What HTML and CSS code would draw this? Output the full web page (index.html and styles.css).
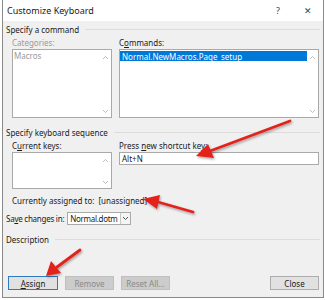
FILE: index.html
```html
<!DOCTYPE html>
<html>
<head>
  <meta charset="utf-8">
  <title>Customize Keyboard</title>
  <link rel="stylesheet" href="styles.css">
</head>
<body>

  <div class="window">
    <div class="titlebar">
      <span class="title">Customize Keyboard</span>
      <span class="help">?</span>
      <span class="x">&#x2715;</span>
    </div>

    <div class="dlg">
      <div class="group"><span>Specify a command</span></div>
      <div class="pair">
        <div class="col">
          <div class="lbl dim">Categories:</div>
          <div class="list tall">
            <div class="item dim">Macros</div>
            <div class="sb">
              <svg width="7" height="5" viewBox="0 0 7 5"><path d="M1 4 L3.5 1.5 L6 4" fill="none" stroke="#bdbdbd"/></svg>
              <svg width="7" height="5" viewBox="0 0 7 5"><path d="M1 1 L3.5 3.5 L6 1" fill="none" stroke="#bdbdbd"/></svg>
            </div>
          </div>
        </div>
        <div class="col">
          <div class="lbl">C<u>o</u>mmands:</div>
          <div class="list tall">
            <div class="item sel">Normal.NewMacros.Page_setup</div>
            <div class="sb">
              <svg width="7" height="5" viewBox="0 0 7 5"><path d="M1 4 L3.5 1.5 L6 4" fill="none" stroke="#bdbdbd"/></svg>
              <svg width="7" height="5" viewBox="0 0 7 5"><path d="M1 1 L3.5 3.5 L6 1" fill="none" stroke="#bdbdbd"/></svg>
            </div>
          </div>
        </div>
      </div>

      <div class="group g2"><span>Specify keyboard sequence</span></div>
      <div class="pair">
        <div class="col">
          <div class="lbl">C<u>u</u>rrent keys:</div>
          <div class="list keys">
            <div class="item"></div>
            <div class="sb">
              <svg width="7" height="5" viewBox="0 0 7 5"><path d="M1 4 L3.5 1.5 L6 4" fill="none" stroke="#bdbdbd"/></svg>
              <svg width="7" height="5" viewBox="0 0 7 5"><path d="M1 1 L3.5 3.5 L6 1" fill="none" stroke="#bdbdbd"/></svg>
            </div>
          </div>
        </div>
        <div class="col">
          <div class="lbl">Press <u>n</u>ew shortcut key:</div>
          <div class="textbox">Alt+N</div>
        </div>
      </div>

      <div class="assigned">Currently assigned to:<span class="val">[unassigned]</span></div>

      <div class="saverow">
        <span class="savelbl">Sa<u>v</u>e changes in:</span>
        <div class="combo">
          <span class="cval">Normal.dotm</span>
          <span class="carrow"><svg width="7" height="5" viewBox="0 0 7 5"><path d="M1 1 L3.5 3.5 L6 1" fill="none" stroke="#555"/></svg></span>
        </div>
      </div>

      <div class="group g3"><span>Description</span></div>

      <div class="buttons">
        <button class="btn default"><u>A</u>ssign</button>
        <button class="btn off">Remove</button>
        <button class="btn off">Reset All...</button>
        <span class="spacer"></span>
        <button class="btn">Close</button>
      </div>
    </div>
  </div>

  <!-- red annotation arrows drawn over the dialog -->
  <svg class="marks" width="325" height="300" viewBox="0 0 325 300">
    <defs>
      <filter id="shade" x="-20%" y="-20%" width="140%" height="140%">
        <feDropShadow dx="1" dy="1.5" stdDeviation="1" flood-color="#000" flood-opacity="0.35"/>
      </filter>
    </defs>
    <g fill="#e3231c" stroke="#e3231c" stroke-width="2.8" stroke-linecap="round" filter="url(#shade)">
      <line x1="290" y1="121" x2="210" y2="151"/>
      <polygon stroke="none" points="196,156 208,144 214,158"/>
      <line x1="193" y1="212" x2="158" y2="202"/>
      <polygon stroke="none" points="143,199 160,195 157,209"/>
      <line x1="80" y1="250" x2="57" y2="267"/>
      <polygon stroke="none" points="46,276 51,261 61,273"/>
    </g>
  </svg>

</body>
</html>
```

FILE: styles.css
```css
body {
  margin: 0;
  background: #fff;
  font-family: "Noto Sans", "Open Sans", sans-serif;
  font-size: 8px;
  color: #1a1a1a;
}

.window {
  margin-left: 2px;
  width: 320px;
  height: 297px;
  border: 1px solid #8a8a8a;
  border-top: 0;
  background: #f0f0f0;
  display: flex;
  flex-direction: column;
}

.titlebar {
  height: 21px;
  background: #fff;
  display: flex;
  align-items: center;
  padding-left: 4px;
}

.title {
  font-size: 9px;
  flex: 1;
}

.help {
  width: 30px;
  text-align: center;
  font-size: 9px;
  color: #444;
}

.x {
  width: 30px;
  text-align: center;
  font-size: 9px;
  color: #444;
}

.dlg {
  padding: 3px 3px 0 3px;
  flex: 1;
  display: flex;
  flex-direction: column;
}

.group {
  display: flex;
  align-items: center;
  height: 11px;
  line-height: 11px;
}

.group::after {
  content: "";
  flex: 1;
  border-top: 1px solid #dcdcdc;
  margin-left: 6px;
}

.g2 {
  margin-top: 9px;
}

.g3 {
  margin-top: 9px;
}

.pair {
  display: grid;
  grid-template-columns: 100px 200px;
  column-gap: 7px;
  margin-left: 6px;
  margin-top: 2px;
}

.col {
  display: flex;
  flex-direction: column;
}

.lbl {
  height: 11px;
  line-height: 11px;
  margin-bottom: 1px;
}

.dim {
  color: #9a9a9a;
}

.list {
  background: #fff;
  border: 1px solid #a9a9a9;
  display: flex;
  box-sizing: border-box;
}

.tall {
  height: 69px;
}

.keys {
  height: 37px;
}

.list .item {
  flex: 1;
  padding: 1px 1px 0;
  line-height: 9px;
  height: 9px;
}

.item.sel {
  background: #0078d7;
  color: #fff;
  padding-left: 2px;
  margin: 1px 0 0 0;
}

.sb {
  width: 11px;
  display: flex;
  flex-direction: column;
  justify-content: space-between;
  align-items: center;
  padding: 5px 0 3px;
}

.textbox {
  height: 13px;
  box-sizing: border-box;
  border: 1px solid #a9a9a9;
  background: #fff;
  line-height: 11px;
  padding-left: 2px;
}

.assigned {
  margin: 6px 0 0 6px;
  height: 11px;
  line-height: 11px;
}

.assigned .val {
  margin-left: 4px;
}

.saverow {
  margin-top: 6px;
  display: flex;
  align-items: center;
  height: 13px;
}

.savelbl {
  white-space: nowrap;
  flex-shrink: 0;
  margin-right: 3px;
  letter-spacing: -0.25px;
}

.combo {
  width: 64px;
  flex-shrink: 0;
  height: 13px;
  box-sizing: border-box;
  border: 1px solid #a9a9a9;
  background: #fff;
  display: flex;
  align-items: center;
}

.cval {
  flex: 1;
  padding-left: 2px;
  white-space: nowrap;
  letter-spacing: -0.3px;
}

.carrow {
  width: 9px;
  height: 11px;
  border-left: 1px solid #c8c8c8;
  background: #f4f4f4;
  display: flex;
  align-items: center;
  justify-content: center;
}

.buttons {
  margin-top: 31px;
  display: flex;
  gap: 7px;
  padding-left: 2px;
  padding-right: 1px;
}

.spacer {
  flex: 1;
}

.btn {
  font-family: "Noto Sans", "Open Sans", sans-serif;
  font-size: 8px;
  width: 49px;
  height: 14px;
  padding: 0;
  border: 1px solid #adadad;
  background: #e1e1e1;
  color: #1a1a1a;
}

.btn.default {
  width: 50px;
  border-color: #2f7bc1;
}

.btn.off {
  background: #cccccc;
  border-color: #bfbfbf;
  color: #8a8a8a;
}

.marks {
  position: absolute;
  left: 0;
  top: 0;
  pointer-events: none;
}
```
